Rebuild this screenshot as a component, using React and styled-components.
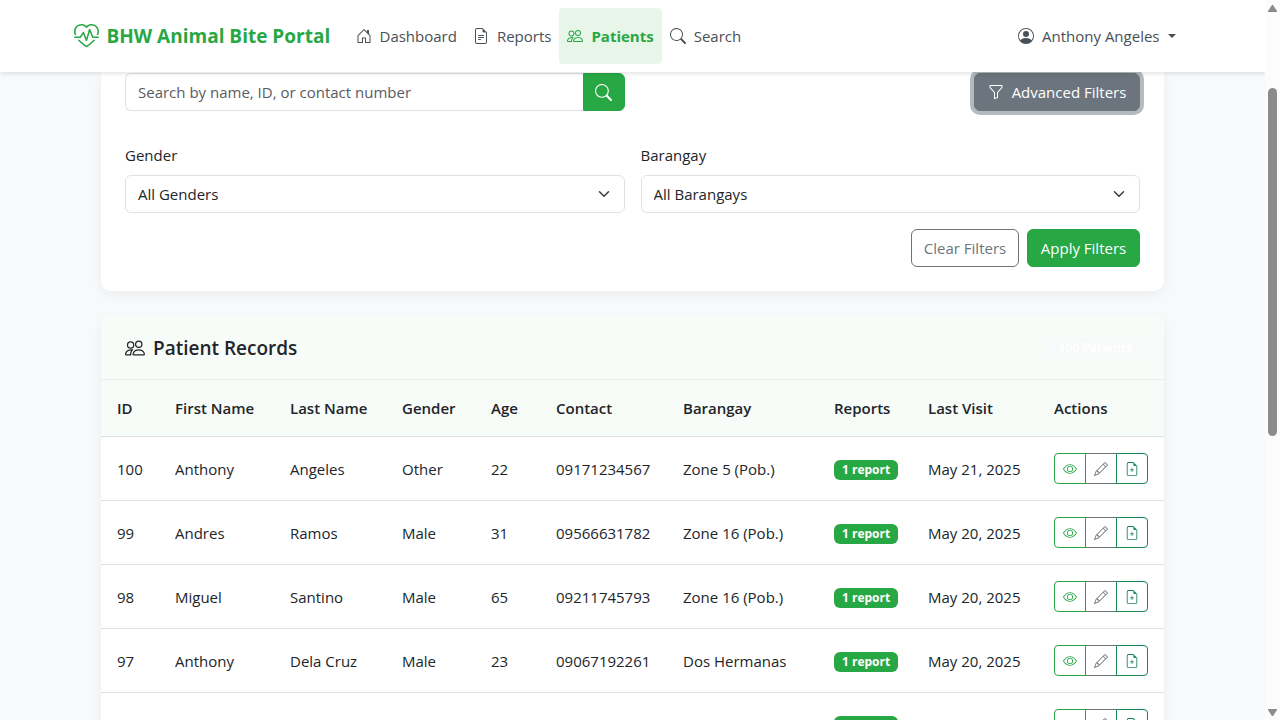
import React from "react";
import styled, { createGlobalStyle, css } from "styled-components";
import {
  BsHeartPulse,
  BsHouseDoor,
  BsFileEarmarkText,
  BsPeople,
  BsSearch,
  BsPersonCircle,
  BsFunnel,
  BsEye,
  BsPencil,
  BsFileEarmarkPlus,
} from "react-icons/bs";

const green = "#28a745";
const gray = "#6c757d";
const teal = "#198754";

const GlobalStyle = createGlobalStyle`
  *, *::before, *::after { box-sizing: border-box; }
  body {
    margin: 0;
    background: #f8f9fa;
    color: #212529;
    font: 400 15px/24px "Open Sans", "Noto Sans", sans-serif;
    overflow: hidden;
  }
  button, input, select { font: inherit; }
  svg { flex: none; display: block; }
`;

const Shell = styled.div`
  display: grid;
  grid-template-columns: minmax(0, 1fr) 15px;
  height: 100vh;
`;

const Page = styled.div`
  display: flex;
  flex-direction: column;
  overflow: hidden;
  background: #f8f9fb;
`;

const Header = styled.header`
  flex: none;
  position: relative;
  z-index: 1;
  background: #fff;
  box-shadow: 0 2px 4px rgba(0, 0, 0, 0.1);
`;

const HeaderInner = styled.div`
  display: flex;
  align-items: center;
  max-width: 1118px;
  margin: 0 auto;
  padding: 8px 8px 8px 0;
`;

const Brand = styled.a`
  display: flex;
  align-items: center;
  gap: 8px;
  width: 258px;
  margin-right: 16px;
  color: ${green};
  font-size: 19px;
  font-weight: 700;
  white-space: nowrap;
  text-decoration: none;
`;

const Nav = styled.nav`
  display: flex;
  flex: 1;
`;

const NavLink = styled.a`
  display: flex;
  align-items: center;
  gap: 8px;
  padding: 16px 8px;
  border-radius: 4px;
  color: #495057;
  text-decoration: none;
  white-space: nowrap;
  ${(p) =>
    p.$active &&
    css`
      color: ${green};
      background: #e8f5e9;
      font-weight: 700;
    `}
`;

const UserButton = styled.button`
  display: flex;
  align-items: center;
  gap: 8px;
  padding: 16px 8px;
  border: 0;
  background: none;
  color: #495057;
  &::after {
    content: "";
    border: 4px solid transparent;
    border-top-color: currentColor;
    border-bottom: 0;
  }
`;

const Main = styled.main`
  width: 100%;
  max-width: 1063px;
  margin: 0 auto;
  flex: 1;
  min-height: 0;
`;

const Card = styled.section`
  background: #fff;
  border-radius: ${(p) => (p.$attached ? "0 0 10px 10px" : "10px")};
  box-shadow: 0 4px 12px rgba(0, 0, 0, 0.05);
`;

const FilterForm = styled.form`
  padding: 1px 24px 24px;
  margin-bottom: 24px;
`;

const Columns = styled.div`
  display: grid;
  grid-template-columns: 1fr 1fr;
  gap: 16px;
`;

const SearchGroup = styled.div`
  display: flex;
`;

const SearchInput = styled.input`
  flex: 1;
  min-width: 0;
  height: 38px;
  padding: 0 12px;
  border: 1px solid #dee2e6;
  border-right: 0;
  border-radius: 6px 0 0 6px;
  background: #fff;
  &::placeholder {
    color: #595c5f;
    opacity: 1;
  }
`;

const Button = styled.button`
  display: flex;
  align-items: center;
  justify-content: center;
  gap: 8px;
  height: 38px;
  padding: 0 12px;
  border: 1px solid ${green};
  border-radius: 6px;
  background: ${green};
  color: #fff;
  white-space: nowrap;
`;

const SearchButton = styled(Button)`
  width: 42px;
  border-radius: 0 6px 6px 0;
`;

const ToggleButton = styled(Button)`
  justify-self: end;
  width: 166px;
  border-color: ${gray};
  background: ${gray};
  box-shadow: 0 0 0 4px #b5babe;
`;

const ClearButton = styled(Button)`
  width: 108px;
  border-color: ${gray};
  background: #fff;
  color: ${gray};
`;

const ApplyButton = styled(Button)`
  width: 113px;
`;

const FilterFields = styled(Columns)`
  margin-top: 32px;
`;

const Field = styled.div`
  display: grid;
  gap: 8px;
`;

const Select = styled.select`
  appearance: none;
  width: 100%;
  height: 38px;
  padding: 0 36px 0 12px;
  border: 1px solid #dee2e6;
  border-radius: 6px;
  background: none;
  color: #212529;
`;

const SelectBox = styled.div`
  position: relative;
  svg {
    position: absolute;
    top: 13px;
    right: 15px;
    pointer-events: none;
  }
`;

const FormActions = styled.div`
  display: flex;
  justify-content: flex-end;
  gap: 8px;
  margin-top: 16px;
`;

const CardHeader = styled.header`
  display: flex;
  align-items: center;
  justify-content: space-between;
  padding: 21px 24px 19px;
  border-bottom: 1px solid #e9efec;
  border-radius: 10px 10px 0 0;
  background: #f8fcf9;
`;

const CardTitle = styled.h2`
  display: flex;
  align-items: center;
  gap: 8px;
  margin: 0;
  font-size: 19px;
  line-height: 24px;
  font-weight: 600;
`;

const Badge = styled.span`
  display: inline-block;
  padding: 0 8px;
  border-radius: 6px;
  background: ${(p) => (p.$light ? "#f8f9fa" : green)};
  color: #fff;
  font-size: 12px;
  line-height: 20px;
  font-weight: 700;
  vertical-align: middle;
  white-space: nowrap;
`;

const Table = styled.table`
  width: 100%;
  table-layout: fixed;
  border-collapse: separate;
  border-spacing: 0;
`;

const Th = styled.th`
  height: 57px;
  padding: 0 16px;
  border-bottom: 1px solid #dee2e6;
  background: #f8fcf9;
  text-align: left;
  font-weight: 600;
  white-space: nowrap;
`;

const Td = styled.td`
  height: 64px;
  padding: 0 16px;
  border-bottom: 1px solid #dee2e6;
  vertical-align: middle;
  white-space: nowrap;
`;

const ActionGroup = styled.div`
  display: flex;
`;

const ActionButton = styled.button`
  display: grid;
  place-items: center;
  width: 32px;
  height: 31px;
  padding: 0;
  border: 1px solid ${(p) => p.$color};
  background: #fff;
  color: ${(p) => p.$color};
  & + & {
    margin-left: -1px;
  }
  &:first-child {
    border-radius: 4px 0 0 4px;
  }
  &:last-child {
    border-radius: 0 4px 4px 0;
  }
`;

const ScrollTrack = styled.div`
  display: flex;
  flex-direction: column;
  align-items: center;
  justify-content: space-between;
  padding: 5px 0 4px;
  background: #fcfcfc;
`;

const ScrollLane = styled.div`
  flex: 1;
  width: 9px;
  padding-top: 76px;
`;

const ScrollThumb = styled.div`
  height: 348px;
  border-radius: 5px;
  background: #8b8b8b;
`;

const columns = [
  ["ID", 58],
  ["First Name", 115],
  ["Last Name", 112],
  ["Gender", 89],
  ["Age", 65],
  ["Contact", 127],
  ["Barangay", 151],
  ["Reports", 94],
  ["Last Visit", 126],
  ["Actions", 126],
];

const patients = [
  [100, "Anthony", "Angeles", "Other", 22, "09171234567", "Zone 5 (Pob.)", "May 21, 2025"],
  [99, "Andres", "Ramos", "Male", 31, "09566631782", "Zone 16 (Pob.)", "May 20, 2025"],
  [98, "Miguel", "Santino", "Male", 65, "09211745793", "Zone 16 (Pob.)", "May 20, 2025"],
  [97, "Anthony", "Dela Cruz", "Male", 23, "09067192261", "Dos Hermanas", "May 20, 2025"],
  [96, "Claudine", "Bondoc", "Female", 27, "09175550196", "Zone 12 (Pob.)", "May 20, 2025"],
];

function Chevron() {
  return (
    <svg width="12" height="12" viewBox="0 0 16 16" fill="none" aria-hidden="true">
      <path d="m2 5 6 6 6-6" stroke="#343a40" strokeWidth="2" strokeLinecap="round" strokeLinejoin="round" />
    </svg>
  );
}

function FilterSelect({ id, label, option }) {
  return (
    <Field>
      <label htmlFor={id}>{label}</label>
      <SelectBox>
        <Select id={id}>
          <option>{option}</option>
        </Select>
        <Chevron />
      </SelectBox>
    </Field>
  );
}

function PatientRow({ patient }) {
  const [id, first, last, gender, age, contact, barangay, visit] = patient;
  return (
    <tr>
      <Td>{id}</Td>
      <Td>{first}</Td>
      <Td>{last}</Td>
      <Td>{gender}</Td>
      <Td>{age}</Td>
      <Td>{contact}</Td>
      <Td>{barangay}</Td>
      <Td><Badge>1 report</Badge></Td>
      <Td>{visit}</Td>
      <Td>
        <ActionGroup>
          <ActionButton type="button" $color={green} aria-label="View patient"><BsEye size={14} /></ActionButton>
          <ActionButton type="button" $color={gray} aria-label="Edit patient"><BsPencil size={14} /></ActionButton>
          <ActionButton type="button" $color={teal} aria-label="Add report"><BsFileEarmarkPlus size={14} /></ActionButton>
        </ActionGroup>
      </Td>
    </tr>
  );
}

export default function App() {
  return (
    <Shell>
      <GlobalStyle />
      <Page>
        <Header>
          <HeaderInner>
            <Brand href="#"><BsHeartPulse size={25} />BHW Animal Bite Portal</Brand>
            <Nav>
              <NavLink href="#"><BsHouseDoor size={16} />Dashboard</NavLink>
              <NavLink href="#"><BsFileEarmarkText size={16} />Reports</NavLink>
              <NavLink href="#" $active><BsPeople size={16} />Patients</NavLink>
              <NavLink href="#"><BsSearch size={16} />Search</NavLink>
            </Nav>
            <UserButton type="button"><BsPersonCircle size={16} />Anthony Angeles</UserButton>
          </HeaderInner>
        </Header>
        <Main>
          <Card as={FilterForm} $attached>
            <Columns>
              <SearchGroup>
                <SearchInput type="text" aria-label="Search patients" placeholder="Search by name, ID, or contact number" />
                <SearchButton type="button" aria-label="Search"><BsSearch size={17} /></SearchButton>
              </SearchGroup>
              <ToggleButton type="button"><BsFunnel size={16} />Advanced Filters</ToggleButton>
            </Columns>
            <FilterFields>
              <FilterSelect id="gender" label="Gender" option="All Genders" />
              <FilterSelect id="barangay" label="Barangay" option="All Barangays" />
            </FilterFields>
            <FormActions>
              <ClearButton type="button">Clear Filters</ClearButton>
              <ApplyButton type="button">Apply Filters</ApplyButton>
            </FormActions>
          </Card>
          <Card>
            <CardHeader>
              <CardTitle><BsPeople size={20} />Patient Records</CardTitle>
              <Badge $light>100 Patients</Badge>
            </CardHeader>
            <Table>
              <colgroup>
                {columns.map(([name, width]) => <col key={name} width={width} />)}
              </colgroup>
              <thead>
                <tr>{columns.map(([name]) => <Th key={name} scope="col">{name}</Th>)}</tr>
              </thead>
              <tbody>
                {patients.map((p) => <PatientRow key={p[0]} patient={p} />)}
              </tbody>
            </Table>
          </Card>
        </Main>
      </Page>
      <ScrollTrack aria-hidden="true">
        <svg width="9" height="7" viewBox="0 0 9 7"><path d="M4 0h1l4 6v1H0V6Z" fill="#8b8b8b" /></svg>
        <ScrollLane><ScrollThumb /></ScrollLane>
        <svg width="9" height="7" viewBox="0 0 9 7"><path d="M0 0h9v1L5 7H4L0 1Z" fill="#8b8b8b" /></svg>
      </ScrollTrack>
    </Shell>
  );
}
